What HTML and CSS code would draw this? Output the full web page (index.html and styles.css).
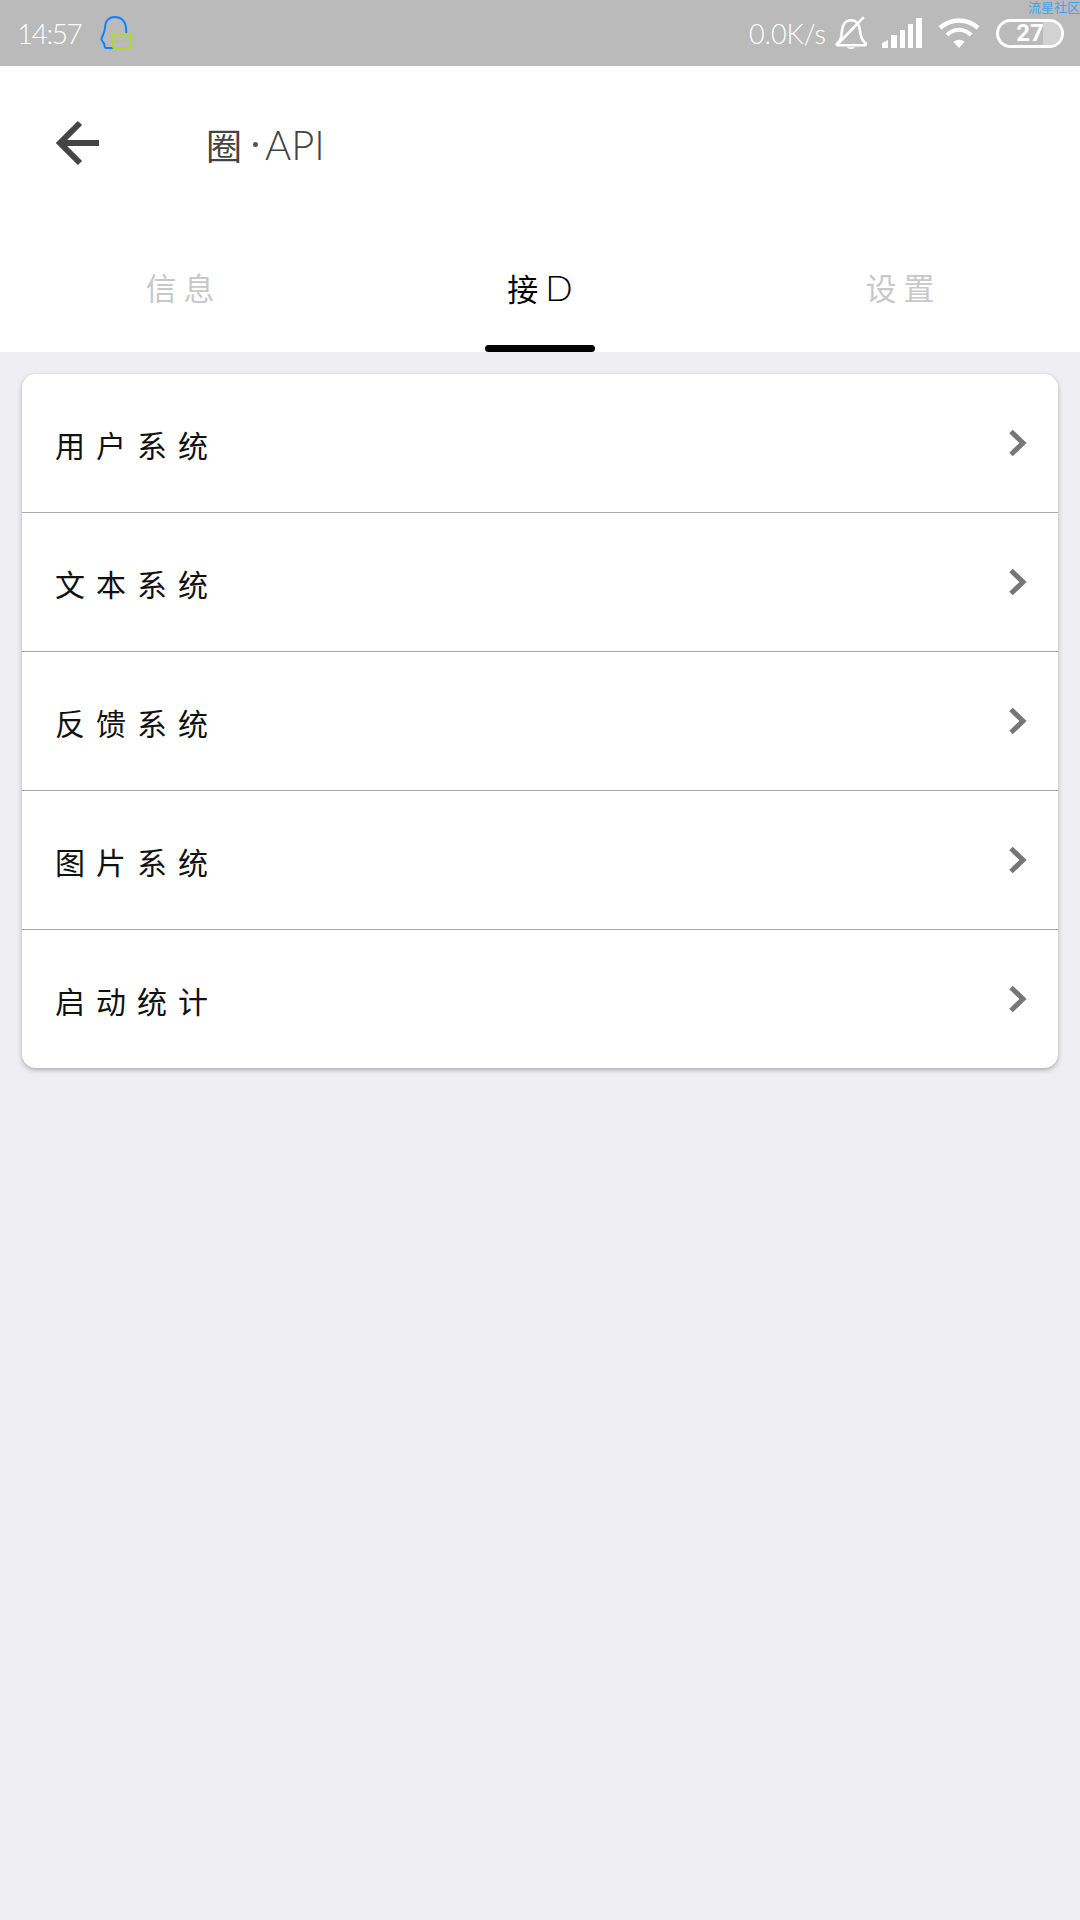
FILE: index.html
```html
<!DOCTYPE html>
<html>
<head>
    <title>API</title>
    <link rel="stylesheet" href="styles.css">
</head>
<body>
    <!-- Status bar -->
    <div class="status-bar">
        <div class="status-left">
            <span class="status-time">14:57</span>
            <svg class="qq-icon" width="32" height="36" viewBox="0 0 32 36">
                <path d="M14 33L6 33C4 33 5 30 4 28.500C3 27 1 25.500 1.500 23.500C2.500 20.500 5 17 5 13C5 6 9 2 15 2C21 2 25.500 6 26 13L26.500 19" fill="none" stroke="#0a84ff" stroke-width="2"/>
                <rect x="13" y="19" width="17" height="14" rx="1" fill="none" stroke="#b5d62a" stroke-width="2"/>
                <path d="M19 33L22 35.500L25 33Z" fill="#b5d62a"/>
                <circle cx="17.500" cy="26" r="1" fill="#b5d62a"/>
                <circle cx="21.500" cy="26" r="1" fill="#b5d62a"/>
                <circle cx="25.500" cy="26" r="1" fill="#b5d62a"/>
            </svg>
        </div>
        <div class="status-right">
            <span class="status-speed">0.0K/s</span>
            <svg class="bell-icon" width="34" height="34" viewBox="0 0 32 32">
                <path d="M3 26C7 22 7 19 7.500 14C8 8 11 4 16 4C21 4 24 8 24.500 14C25 19 26 23 30 26C30 27 29 27.500 28 27.500L4 27.500C3 27.500 2 26.500 3 26Z" fill="none" stroke="#fff" stroke-width="2.500"/>
                <path d="M12 29.500C13 31.500 19 31.500 20 29.500Z" fill="#fff"/>
                <path d="M2 28L28 1" fill="none" stroke="#fff" stroke-width="2.500"/>
            </svg>
            <svg class="signal-icon" width="40" height="30" viewBox="0 0 40 30">
                <path d="M0 30L0 25L6 22L6 30Z" fill="#fff"/>
                <rect x="9" y="17" width="6" height="13" fill="#fff"/>
                <rect x="18" y="12" width="5" height="18" fill="#fff"/>
                <rect x="26" y="6" width="5" height="24" fill="#fff"/>
                <rect x="34" y="0" width="6" height="30" fill="#fff"/>
            </svg>
            <svg class="wifi-icon" width="42" height="32" viewBox="0 0 42 32">
                <path d="M2 11C13 1 29 1 40 11" fill="none" stroke="#fff" stroke-width="4.500"/>
                <path d="M9 18C16 11 26 11 33 18" fill="none" stroke="#fff" stroke-width="4"/>
                <path d="M15.500 25C19 22 23 22 26.500 25L21 31Z" fill="#fff"/>
            </svg>
            <div class="battery">
                <div class="battery-fill"></div>
                <span class="battery-text">27</span>
            </div>
        </div>
        <span class="watermark">流星社区</span>
    </div>

    <!-- Header -->
    <div class="header">
        <div class="title-row">
            <svg class="back-icon" width="46" height="46" viewBox="0 0 46 46">
                <path d="M45 23L8 23M26 3L6 23L26 43" fill="none" stroke="#444" stroke-width="6"/>
            </svg>
            <span class="title-mark">圈</span>
            <span class="title-dot"></span>
            <span class="title-text">API</span>
        </div>
        <div class="tabs">
            <div class="tab">信 息</div>
            <div class="tab active">接 <span class="tab-latin">D</span></div>
            <div class="tab">设 置</div>
        </div>
    </div>

    <!-- List -->
    <div class="card">
        <div class="row"><span class="row-label">用户系统</span><svg class="chevron" width="20" height="28" viewBox="0 0 20 28"><path d="M3 2.500L15 14L3 25.500" fill="none" stroke="#777" stroke-width="5"/></svg></div>
        <div class="row"><span class="row-label">文本系统</span><svg class="chevron" width="20" height="28" viewBox="0 0 20 28"><path d="M3 2.500L15 14L3 25.500" fill="none" stroke="#777" stroke-width="5"/></svg></div>
        <div class="row"><span class="row-label">反馈系统</span><svg class="chevron" width="20" height="28" viewBox="0 0 20 28"><path d="M3 2.500L15 14L3 25.500" fill="none" stroke="#777" stroke-width="5"/></svg></div>
        <div class="row"><span class="row-label">图片系统</span><svg class="chevron" width="20" height="28" viewBox="0 0 20 28"><path d="M3 2.500L15 14L3 25.500" fill="none" stroke="#777" stroke-width="5"/></svg></div>
        <div class="row"><span class="row-label">启动统计</span><svg class="chevron" width="20" height="28" viewBox="0 0 20 28"><path d="M3 2.500L15 14L3 25.500" fill="none" stroke="#777" stroke-width="5"/></svg></div>
    </div>
</body>
</html>
```

FILE: styles.css
```css
body { margin: 0; height: 1920px; background: #eeeef3; font-family: "Noto Sans CJK SC", "Noto Sans", sans-serif; overflow: hidden; }

.status-bar {
    position: relative;
    height: 66px;
    background: #bababa;
    color: #fff;
    display: flex;
    justify-content: space-between;
    align-items: center;
    padding: 0 16px 0 17px;
}
.status-left { display: flex; align-items: center; gap: 18px; }
.status-right { display: flex; align-items: center; }
.status-time { width: 65px; font-family: "Lato", sans-serif; font-weight: 300; font-size: 28px; letter-spacing: -1.5px; }
.status-speed { font-family: "Lato", sans-serif; font-weight: 300; font-size: 27px; margin-right: 8px; }
.bell-icon { margin-right: 14px; }
.signal-icon { margin-right: 16px; }
.wifi-icon { margin-right: 16px; }
.battery {
    position: relative;
    width: 68px;
    height: 29px;
    box-sizing: border-box;
    border: 3px solid #fff;
    border-radius: 15px;
    display: flex;
    justify-content: center;
    align-items: center;
    overflow: hidden;
}
.battery-fill { position: absolute; top: 0; right: 0; bottom: 0; width: 18px; background: #d2d2d2; }
.battery-text { position: relative; font-family: "Roboto", sans-serif; font-weight: 700; font-size: 24px; line-height: 1; }
.watermark { position: absolute; top: 0; right: 0; font-size: 13px; line-height: 13px; color: #3da5f0; }

.header { background: #fff; height: 286px; }
.title-row { display: flex; align-items: center; height: 156px; padding-left: 54px; }
.back-icon { margin-top: -3px; }
.title-mark { margin-left: 106px; font-size: 36px; line-height: 40px; color: #444; }
.title-dot { width: 5px; height: 5px; margin-left: 11px; border-radius: 50%; background: #555; }
.title-text { margin-left: 7px; font-family: "Lato", sans-serif; font-weight: 300; font-size: 42px; line-height: 40px; color: #444; transform: scaleX(0.95); transform-origin: left center; }

.tabs { display: flex; height: 130px; }
.tab {
    flex: 1;
    height: 130px;
    box-sizing: border-box;
    padding-top: 43px;
    text-align: center;
    font-size: 31px;
    line-height: 44px;
    color: #c8c8c8;
    position: relative;
}
.tab.active { color: #000; }
.tab-latin { font-family: "Lato", sans-serif; font-weight: 300; font-size: 36px; }
.tab.active::after {
    content: "";
    position: absolute;
    left: 125px;
    right: 125px;
    bottom: 0;
    height: 7px;
    border-radius: 4px;
    background: #000;
}

.card {
    margin: 22px 22px 0;
    background: #fff;
    border-radius: 14px;
    box-shadow: 0 2px 5px rgba(0, 0, 0, 0.28);
}
.row {
    height: 139px;
    box-sizing: border-box;
    border-bottom: 1px solid #a8a8a8;
    display: flex;
    justify-content: space-between;
    align-items: center;
    padding: 0 30px 0 33px;
}
.row:last-child { height: 138px; border-bottom: none; }
.row-label { font-size: 30px; letter-spacing: 11px; color: #111; padding-top: 2px; }
```
